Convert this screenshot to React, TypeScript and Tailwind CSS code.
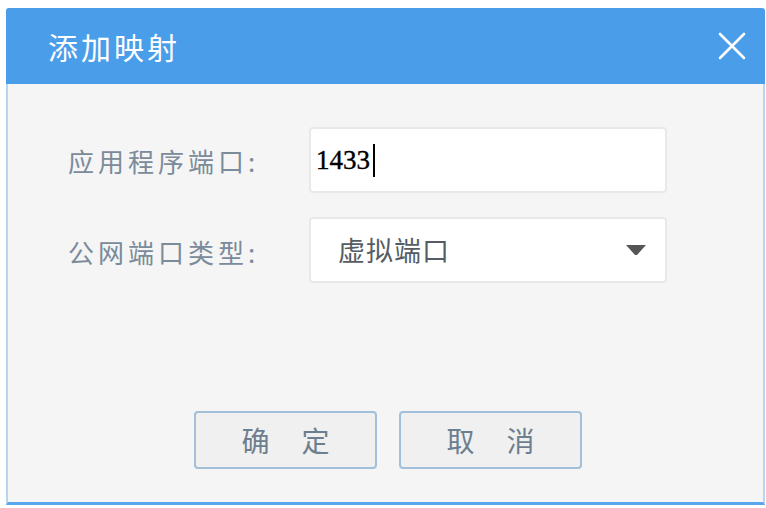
import { useState } from "react";

const cjk = { fontFamily: '"Noto Sans CJK SC", "Noto Sans", sans-serif' };

const CloseIcon = () => (
  <svg width="30" height="30" viewBox="0 0 30 30" fill="none">
    <path d="M3 3 L27 27 M27 3 L3 27" stroke="white" strokeWidth="2.6" strokeLinecap="round" />
  </svg>
);

const Caret = () => (
  <svg width="20" height="12" viewBox="0 0 20 12">
    <path d="M0 1 H20 L11 11 H9 Z" fill="#555555" />
  </svg>
);

const App = () => {
  const [port, setPort] = useState("1433");

  return (
    <div className="w-[766px] h-[508px] bg-white pt-[8px] pl-[6px]" style={cjk}>
      <div className="w-[759px] h-[497px] flex flex-col">
        <div className="h-[76px] bg-[#4a9de9] flex items-center justify-between pl-[42px] pr-[18px] rounded-t-[3px]">
          <h1 className="text-[30px] tracking-[3px] text-white font-normal leading-none">添加映射</h1>
          <CloseIcon />
        </div>
        <div className="flex-1 bg-[#f5f5f5] border-x-2 border-b-[3px] border-x-[#b7d5f1] border-b-[#5aa6ec] flex flex-col">
          <div className="flex flex-col gap-[24px] pt-[43px] pl-[60px]">
            <div className="flex items-center">
              <label className="w-[241px] text-[26px] tracking-[4px] text-[#7b8b9a]">应用程序端口:</label>
              <div className="w-[358px] h-[66px] bg-white border-2 border-[#e8e8e8] rounded-[4px] flex items-center pl-[5px]">
                <span
                  className="text-[27px] text-black [-webkit-text-stroke:0.4px_black]"
                  style={{ fontFamily: '"Liberation Serif", serif' }}
                >
                  {port}
                </span>
                <span className="w-[2px] h-[33px] bg-black ml-[3px]" onClick={() => setPort(port)} />
              </div>
            </div>
            <div className="flex items-center">
              <label className="w-[241px] text-[26px] tracking-[4px] text-[#7b8b9a] pt-[2px]">公网端口类型:</label>
              <div className="w-[358px] h-[66px] bg-white border-2 border-[#e8e8e8] rounded-[4px] flex items-center justify-between pl-[27px] pr-[19px]">
                <span className="text-[27px] tracking-[1px] text-[#555c63]">虚拟端口</span>
                <Caret />
              </div>
            </div>
          </div>
          <div className="flex gap-[22px] pl-[186px] mt-[128px]">
            <button className="w-[183px] h-[58px] bg-[#f0f0f0] border-2 border-[#a3c0da] rounded-[4px] text-[28px] text-[#6d7e8e] flex items-center justify-center gap-[32px]">
              <span>确</span>
              <span>定</span>
            </button>
            <button className="w-[183px] h-[58px] bg-[#f0f0f0] border-2 border-[#a3c0da] rounded-[4px] text-[28px] text-[#6d7e8e] flex items-center justify-center gap-[32px]">
              <span>取</span>
              <span>消</span>
            </button>
          </div>
        </div>
      </div>
    </div>
  );
};

export default App;
